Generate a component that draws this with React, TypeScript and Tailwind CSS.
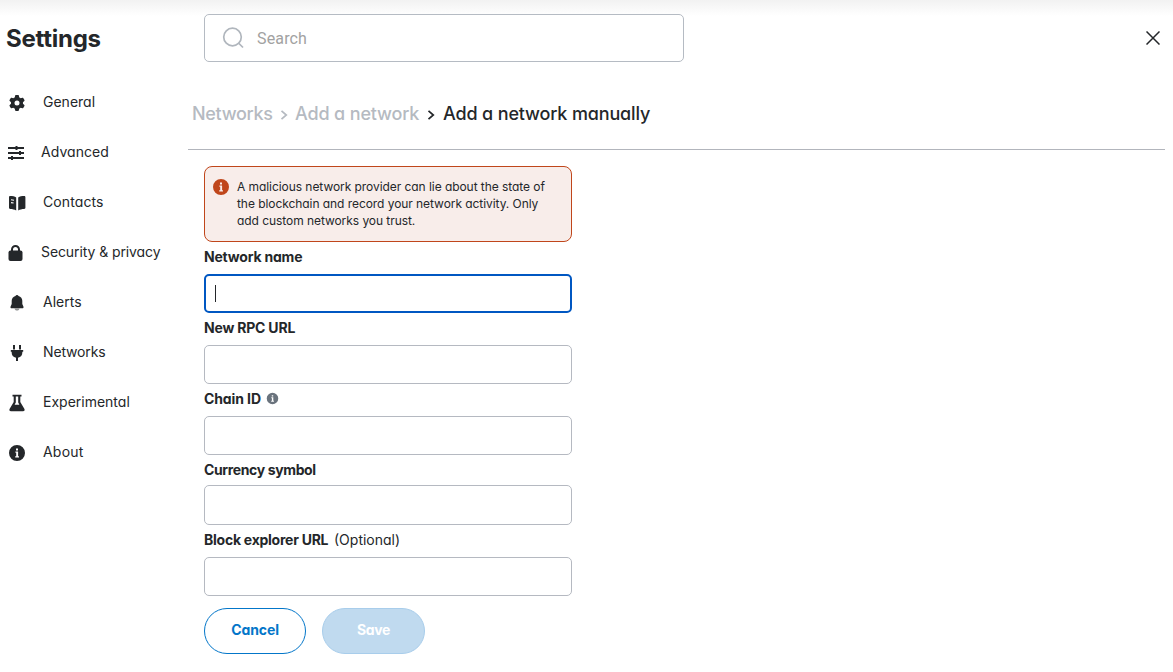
import type { ReactNode } from "react";
import { FaGear } from "react-icons/fa6";

const Svg = ({ children, className = "size-[18px]" }: { children: ReactNode; className?: string }) => (
  <svg viewBox="0 0 18 18" className={`shrink-0 ${className}`} fill="currentColor">
    {children}
  </svg>
);

const Sliders = () => (
  <Svg>
    <path d="M1 3h16v2H1zM1 8h16v2H1zM1 13h16v2H1z" />
    <path d="M8.5 2h2v4h-2zM12 7h2v4h-2zM4 12h2v4H4z" />
  </Svg>
);
const Book = () => (
  <Svg>
    <path d="M1 3.2C1 2.5 1.5 2 2.2 2c2.300 0 4.600.5 6 1.400V16.500C6.500 15.500 4.500 15 2.200 15 1.500 15 1 14.500 1 13.800Z" />
    <path d="M17.400 3.200c0-.7-.5-1.200-1.200-1.200-2.300 0-4.600.5-6 1.400V16.500c1.700-1 3.700-1.500 6-1.500.7 0 1.200-.5 1.200-1.200Z" />
    <path d="M3 5.700l3 .5M3 8.600l2.600.4" stroke="#fff" strokeWidth="1.100" />
  </Svg>
);
const Lock = () => (
  <Svg>
    <path d="M5 8V5.500a3.500 3.500 0 0 1 7 0V8" fill="none" stroke="currentColor" strokeWidth="2" />
    <rect x="1.500" y="6.500" width="14" height="10.500" rx="2" />
  </Svg>
);
const Bell = () => (
  <Svg>
    <path d="M9 1c.8 0 1.300.4 1.500.9 2.400.7 3.800 2.500 3.800 4.900v3.200l1.100 2.400c.4.900 0 1.800-1 1.800H3.600c-1 0-1.400-.9-1-1.800L3.700 10V6.800c0-2.400 1.400-4.200 3.800-4.900C7.700 1.400 8.200 1 9 1Z" />
    <path d="M6.500 14.500h5c-.2 1.300-1.200 2.100-2.500 2.100s-2.300-.8-2.500-2.100Z" opacity=".5" />
  </Svg>
);
const Plug = () => (
  <Svg>
    <path d="M5 1h2v4.500H5zM11 1h2v4.500h-2zM2.800 6h12.400v1.800h-.8c0 3.600-1.600 5.500-4.400 6V17H8v-3.200c-2.800-.5-4.400-2.400-4.400-6h-.8z" />
  </Svg>
);
const Flask = () => (
  <Svg>
    <path fillRule="evenodd" d="M4.500 .8h9v1.800h-1.200v5.400l4 6.700c.8 1.300.2 2.600-1.300 2.600H3c-1.500 0-2.100-1.300-1.300-2.600l4-6.700V2.600H4.500ZM7.800 2.600v6L6.600 10.800h4.800L10.200 8.600V2.600Z" />
  </Svg>
);
const Info = ({ className }: { className?: string }) => (
  <Svg className={className}>
    <path fillRule="evenodd" d="M9 1a8 8 0 1 0 0 16A8 8 0 0 0 9 1Zm-1 3.400h2v2H8Zm-.6 3h2.700v4.800h.9v1.300H7.200v-1.300h1V8.700h-.8Z" />
  </Svg>
);

const nav = [
  { label: "General", icon: <FaGear className="mx-px size-4 shrink-0" />, cls: "ml-[17px]" },
  { label: "Advanced", icon: <Sliders />, cls: "ml-4 tracking-[0.05px]" },
  { label: "Contacts", icon: <Book />, cls: "ml-[17px] tracking-[0.1px]" },
  { label: "Security & privacy", icon: <Lock />, cls: "ml-4 tracking-[-0.09px]" },
  { label: "Alerts", icon: <Bell />, cls: "ml-[17px]" },
  { label: "Networks", icon: <Plug />, cls: "ml-[17px] tracking-[-0.15px]" },
  { label: "Experimental", icon: <Flask />, cls: "ml-[17px]" },
  { label: "About", icon: <Info />, cls: "ml-[17px] tracking-[0.2px]" },
];

const Chevron = ({ className }: { className: string }) => (
  <svg viewBox="0 0 8 12" className={`mt-0.5 h-3 w-2 shrink-0 ${className}`} fill="none" stroke="currentColor" strokeWidth="1.700">
    <path d="M1.500 1.800 6.300 6 1.500 10.200" />
  </svg>
);

const field = "w-[368px] rounded-[5px] border border-[#b5b9c1] bg-white px-2 text-sm outline-none";

export default function App() {
  return (
    <div className="flex h-[672px] w-full overflow-hidden bg-white bg-[linear-gradient(#f2f2f2,#ffffff_16px)] font-['Inter',sans-serif] text-[#24272a] [font-feature-settings:'cv11','ss03']">
      <aside className="w-[188px] shrink-0">
        <h1 className="mt-[21px] ml-1.5 h-9 text-2xl leading-9 font-bold tracking-[-0.25px]">Settings</h1>
        <nav className="mt-5">
          {nav.map((n) => (
            <a key={n.label} className="flex h-[50px] items-center pl-2 text-sm whitespace-nowrap">
              <span className={`flex w-[18px] pt-0.5 ${n.label === "Advanced" || n.label === "Security & privacy" ? "-ml-px" : ""}`}>{n.icon}</span>
              <span className={n.cls}>{n.label}</span>
            </a>
          ))}
        </nav>
      </aside>
      <main className="flex grow flex-col pr-2">
        <div className="flex justify-between pt-3.5">
          <label className="ml-4 flex h-12 w-[480px] items-center rounded-[5px] border border-[#b5bbc3] bg-white pl-[17px]">
            <svg viewBox="0 0 22 22" className="size-[22px]" fill="none" stroke="#b0b6bd" strokeWidth="1.700">
              <circle cx="10.500" cy="10" r="8.800" />
              <path d="m16.500 16 4.500 4.500" />
            </svg>
            <input placeholder="Search" className="mt-0.5 ml-[13px] w-96 font-['Roboto',sans-serif] text-base tracking-[0.15px] outline-none placeholder:text-[#a2a2a2]" />
          </label>
          <button className="mt-[17px] mr-[5px] size-[14px]">
            <svg viewBox="0 0 14 14" className="size-[14px]" stroke="#24272a" strokeWidth="1.500">
              <path d="m.5.500 13 13m0-13-13 13" />
            </svg>
          </button>
        </div>
        <div className="flex h-[88px] items-center border-b border-[#b2b5bc] pt-4 pl-1 text-lg whitespace-nowrap text-[#b5bac1]">
          <span className="w-[88px] font-[450] tracking-[-0.3px]">Networks</span>
          <Chevron className="" />
          <span className="ml-[7px] w-[132px] font-[450] tracking-[-0.15px]">Add a network</span>
          <Chevron className="text-[#24272a]" />
          <span className="ml-2 font-[450] tracking-[-0.15px] text-[#24272a]">Add a network manually</span>
        </div>
        <form className="flex w-[384px] flex-col pt-4 pl-4 text-sm">
          <div className="flex h-[76px] rounded-lg border border-[#c0461b] bg-[#f8edea] pt-[11px] pl-[7px]">
            <Info className="size-[18px] text-[#c0461b]" />
            <p className="ml-[7px] text-xs leading-[17px] tracking-[-0.06px] whitespace-nowrap">
              <span className="block">A malicious network provider can lie about the state of</span>
              <span className="block">the blockchain and record your network activity. Only</span>
              <span className="block">add custom networks you trust.</span>
            </p>
          </div>
          <div className="flex h-8 items-center pb-0.5 font-bold tracking-[-0.2px]">Network name</div>
          <div className="flex h-[39px] w-[368px] items-center rounded-[5px] border-2 border-[#0057c2] bg-white pl-[9px]">
            <span className="h-[17px] w-px bg-[#24272a]" />
          </div>
          <div className="flex h-8 items-center pb-0.5 font-bold tracking-[-0.2px]">New RPC URL</div>
          <input className={`${field} h-[39px]`} />
          <div className="flex h-8 items-center pb-0.5 font-bold">
            <span className="tracking-[-0.1px]">Chain ID</span>
            <Info className="ml-[5px] -mt-0.5 size-[13px] text-[#6a737d]" />
          </div>
          <input className={`${field} h-[39px]`} />
          <div className="flex h-[30px] items-center font-bold tracking-[-0.37px]">Currency symbol</div>
          <input className={`${field} h-10`} />
          <div className="flex h-8 items-center pb-0.5">
            <span className="w-[130px] font-bold tracking-[-0.25px]">Block explorer URL</span>
            <span>(Optional)</span>
          </div>
          <input className={`${field} h-[39px]`} />
          <div className="mt-3 flex gap-4 font-bold">
            <button type="button" className="h-[46px] w-[102px] rounded-full border border-[#0376c9] bg-white pb-0.5 tracking-[-0.1px] text-[#0376c9]">Cancel</button>
            <button type="button" className="h-[46px] w-[103px] rounded-full border border-[#a8cdeb] bg-[#c0daef] pb-0.5 tracking-[-0.4px] text-white">Save</button>
          </div>
        </form>
      </main>
    </div>
  );
}
